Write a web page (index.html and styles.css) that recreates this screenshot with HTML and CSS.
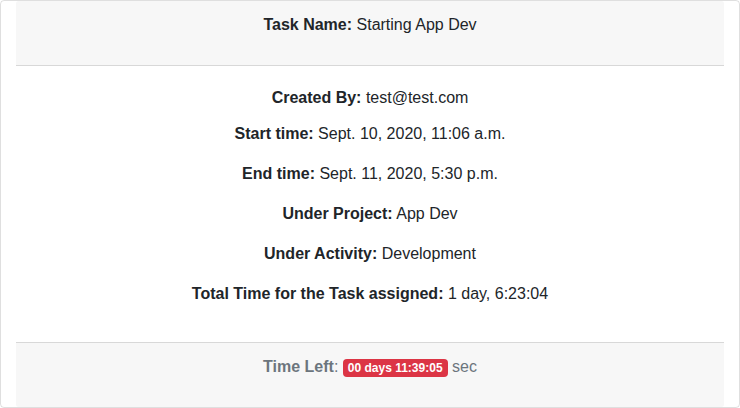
FILE: index.html
```html
<!DOCTYPE html>
<html>
<head>
<meta charset="utf-8">
<link rel="stylesheet" href="styles.css">
</head>
<body>
<div class="card">
  <div class="card-header">
    <p><strong>Task Name:</strong> Starting App Dev</p>
  </div>
  <div class="card-body">
    <p class="first"><strong>Created By:</strong> test@test.com</p>
    <p><strong>Start time:</strong> Sept. 10, 2020, 11:06 a.m.</p>
    <p><strong>End time:</strong> Sept. 11, 2020, 5:30 p.m.</p>
    <p><strong>Under Project:</strong> App Dev</p>
    <p><strong>Under Activity:</strong> Development</p>
    <p><strong>Total Time for the Task assigned:</strong> 1 day, 6:23:04</p>
  </div>
  <div class="card-footer">
    <p><strong>Time Left</strong>: <span class="badge">00 days 11:39:05</span> sec</p>
  </div>
</div>
</body>
</html>
```
FILE: styles.css
```css
html, body {
  margin: 0;
  padding: 0;
  background: #fff;
}
body {
  font-family: "Liberation Sans", Arial, sans-serif;
  font-size: 16px;
  line-height: 24px;
  color: #212529;
}
.card {
  box-sizing: border-box;
  width: 740px;
  height: 408px;
  border: 1px solid rgba(0,0,0,.125);
  border-radius: 4px;
  display: flex;
  flex-direction: column;
  text-align: center;
}
p {
  margin: 0 0 16px;
}
strong {
  font-weight: 700;
}
.card-header {
  margin: 0 15px;
  padding: 12px 20px;
  background: #f7f7f7;
  border-bottom: 1px solid rgba(0,0,0,.125);
  border-radius: 3px 3px 0 0;
}
.card-body {
  flex: 1;
  padding: 20px;
}
.card-body .first {
  margin-bottom: 12px;
}
.card-footer {
  margin: 0 15px;
  padding: 12px 20px;
  background: #f7f7f7;
  border-top: 1px solid rgba(0,0,0,.125);
  border-radius: 0 0 3px 3px;
  color: #6c757d;
}
.badge {
  display: inline-block;
  font-size: 12px;
  font-weight: 700;
  line-height: 1;
  padding: 3px 5px;
  color: #fff;
  background: #dc3545;
  border-radius: 4px;
  vertical-align: baseline;
  white-space: nowrap;
}
```
